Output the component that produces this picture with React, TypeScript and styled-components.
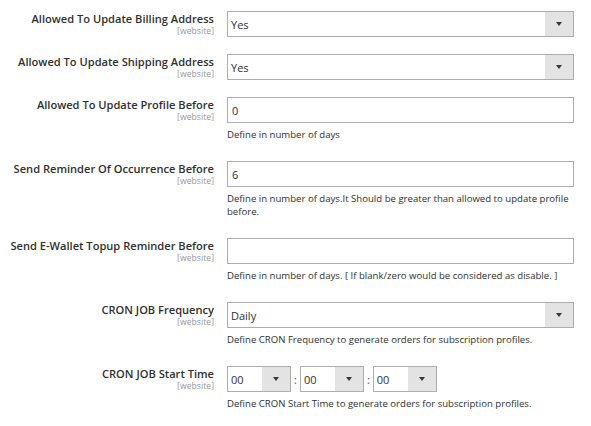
import React from "react";
import styled, { createGlobalStyle } from "styled-components";

const Global = createGlobalStyle`
  html, body { margin: 0; padding: 0; background: #ffffff; }
  body { font-family: "Open Sans", "Noto Sans", sans-serif; color: #303030; }
`;

const Form = styled.div`
  padding-top: 11px;
  width: 591px;
  display: flex;
  flex-direction: column;
  gap: 17px;
`;

const Row = styled.div`
  display: grid;
  grid-template-columns: 214px 347px;
  column-gap: 13px;
  align-items: start;
`;

const LabelCell = styled.div`
  display: flex;
  flex-direction: column;
  align-items: flex-end;
  text-align: right;
`;

const LabelText = styled.span`
  font-size: 11.1px;
  font-weight: 600;
  line-height: 15px;
  color: #303030;
  white-space: nowrap;
`;

const Scope = styled.span`
  font-size: 8.7px;
  line-height: 11px;
  color: #999999;
`;

const ControlCell = styled.div`
  display: flex;
  flex-direction: column;
`;

const SelectBox = styled.div<{ $width?: number }>`
  box-sizing: border-box;
  height: 26px;
  width: ${(p) => (p.$width ? `${p.$width}px` : "100%")};
  border: 1px solid #adadad;
  background: #ffffff;
  display: flex;
  align-items: stretch;
`;

const SelectValue = styled.span`
  flex: 1;
  display: flex;
  align-items: center;
  padding-left: 3px;
  font-size: 11px;
  color: #303030;
`;

const ArrowBox = styled.span`
  width: 28px;
  background: #e3e3e3;
  display: flex;
  align-items: center;
  justify-content: center;
`;

const Arrow = styled.span`
  width: 0;
  height: 0;
  border-left: 3px solid transparent;
  border-right: 3px solid transparent;
  border-top: 4px solid #41362f;
`;

const TextInput = styled.input`
  box-sizing: border-box;
  height: 26px;
  width: 100%;
  border: 1px solid #adadad;
  padding: 0 4px;
  margin: 0;
  font-family: "Open Sans", "Noto Sans", sans-serif;
  font-size: 11px;
  color: #303030;
  background: #ffffff;
  outline: none;
`;

const Note = styled.div`
  margin-top: 5px;
  margin-bottom: 3px;
  font-size: 9.6px;
  line-height: 13px;
  color: #303030;
`;

const TimeRow = styled.div`
  display: flex;
  align-items: center;
  gap: 3px;
`;

const Colon = styled.span`
  font-size: 11px;
  color: #5a4a3a;
`;

type Field = {
  label: string;
  kind: "select" | "input" | "time";
  value?: string;
  note?: string;
};

const fields: Field[] = [
  { label: "Allowed To Update Billing Address", kind: "select", value: "Yes" },
  { label: "Allowed To Update Shipping Address", kind: "select", value: "Yes" },
  {
    label: "Allowed To Update Profile Before",
    kind: "input",
    value: "0",
    note: "Define in number of days",
  },
  {
    label: "Send Reminder Of Occurrence Before",
    kind: "input",
    value: "6",
    note: "Define in number of days.It Should be greater than allowed to update profile before.",
  },
  {
    label: "Send E-Wallet Topup Reminder Before",
    kind: "input",
    value: "",
    note: "Define in number of days. [ If blank/zero would be considered as disable. ]",
  },
  {
    label: "CRON JOB Frequency",
    kind: "select",
    value: "Daily",
    note: "Define CRON Frequency to generate orders for subscription profiles.",
  },
  {
    label: "CRON JOB Start Time",
    kind: "time",
    note: "Define CRON Start Time to generate orders for subscription profiles.",
  },
];

const Select: React.FC<{ value: string; width?: number }> = ({ value, width }) => (
  <SelectBox $width={width}>
    <SelectValue>{value}</SelectValue>
    <ArrowBox>
      <Arrow />
    </ArrowBox>
  </SelectBox>
);

export default function App() {
  return (
    <>
      <Global />
      <Form>
        {fields.map((f) => (
          <Row key={f.label}>
            <LabelCell>
              <LabelText>{f.label}</LabelText>
              <Scope>[website]</Scope>
            </LabelCell>
            <ControlCell>
              {f.kind === "select" && <Select value={f.value || ""} />}
              {f.kind === "input" && <TextInput defaultValue={f.value} readOnly />}
              {f.kind === "time" && (
                <TimeRow>
                  <Select value="00" width={64} />
                  <Colon>:</Colon>
                  <Select value="00" width={64} />
                  <Colon>:</Colon>
                  <Select value="00" width={64} />
                </TimeRow>
              )}
              {f.note && <Note>{f.note}</Note>}
            </ControlCell>
          </Row>
        ))}
      </Form>
    </>
  );
}
